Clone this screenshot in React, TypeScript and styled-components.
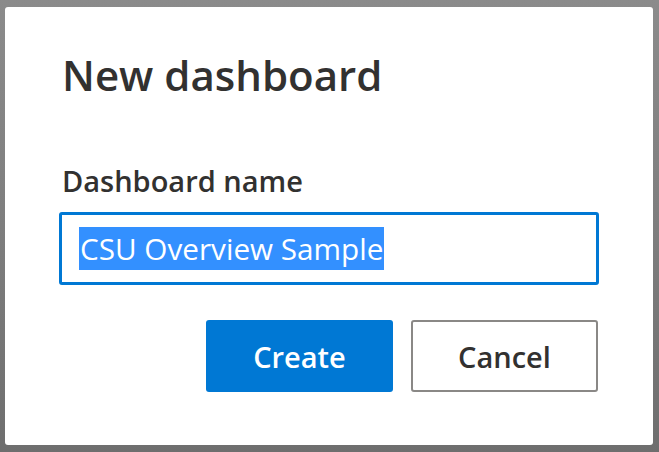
import React from "react";
import styled, { createGlobalStyle } from "styled-components";

const Global = createGlobalStyle`
  html, body { margin: 0; padding: 0; }
  body {
    font-family: "Open Sans", "Noto Sans", sans-serif;
    background: linear-gradient(180deg, #8b8b8b 0%, #7e7e7e 50%, #6e6e6e 100%);
  }
`;

const Backdrop = styled.div`
  box-sizing: border-box;
  width: 659px;
  height: 452px;
  padding: 7px 6px 7px 5px;
  display: flex;
`;

const Dialog = styled.div`
  box-sizing: border-box;
  width: 648px;
  height: 438px;
  background: #ffffff;
  border-radius: 3px;
  padding: 42px 54px 0 54px;
  display: flex;
  flex-direction: column;
  color: #323130;
`;

const Title = styled.h1`
  margin: 0 0 0 3px;
  font-size: 42px;
  line-height: 52px;
  font-weight: 600;
  letter-spacing: 0;
`;

const Label = styled.label`
  margin: 62px 0 0 3px;
  font-size: 29px;
  line-height: 36px;
  font-weight: 600;
`;

const NameField = styled.div`
  box-sizing: border-box;
  margin-top: 13px;
  height: 73px;
  border: 3px solid #0078d4;
  border-radius: 3px;
  padding: 0 17px;
  display: flex;
  align-items: center;
`;

const Selected = styled.span`
  background: #3390ff;
  color: #ffffff;
  font-size: 29.7px;
  line-height: 43px;
  padding: 0 1px;
`;

const Actions = styled.div`
  margin-top: 35px;
  display: flex;
  justify-content: flex-end;
  gap: 18px;
  padding-right: 1px;
`;

const Button = styled.button<{ $primary?: boolean }>`
  box-sizing: border-box;
  width: 187px;
  height: 72px;
  border-radius: 3px;
  font-family: "Open Sans", "Noto Sans", sans-serif;
  font-size: 29px;
  font-weight: 600;
  cursor: pointer;
  border: ${(p) => (p.$primary ? "none" : "2px solid #8a8886")};
  background: ${(p) => (p.$primary ? "#0078d4" : "#ffffff")};
  color: ${(p) => (p.$primary ? "#ffffff" : "#323130")};
`;

export default function App() {
  return (
    <>
      <Global />
      <Backdrop>
        <Dialog>
          <Title>New dashboard</Title>
          <Label>Dashboard name</Label>
          <NameField>
            <Selected>CSU Overview Sample</Selected>
          </NameField>
          <Actions>
            <Button $primary>Create</Button>
            <Button>Cancel</Button>
          </Actions>
        </Dialog>
      </Backdrop>
    </>
  );
}
